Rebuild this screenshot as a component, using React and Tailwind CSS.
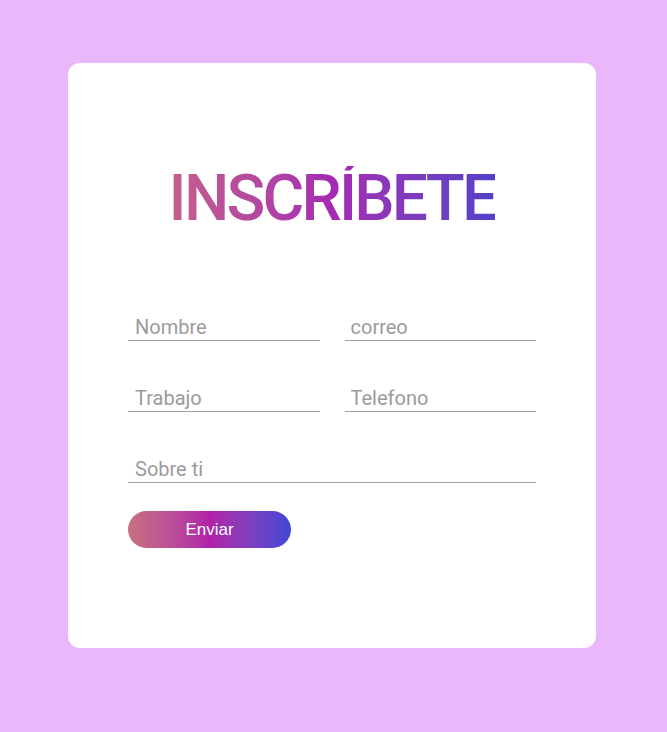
import React from 'react';

export default function App() {
  return (
    <div className="min-h-[732px] w-full bg-[#eab8fa] pt-[63px] pl-[68px]" style={{ fontFamily: 'Roboto, "Liberation Sans", sans-serif' }}>
      <div className="w-[528px] h-[585px] bg-white rounded-[12px] px-[60px] pt-[103px]">
        <h1 className="text-center text-[64px] leading-[66px] font-medium tracking-[-2.8px] bg-gradient-to-r from-[#c65f8a] via-[#a52ab2] to-[#5340c8] bg-clip-text text-transparent w-fit mx-auto">
          INSCRÍBETE
        </h1>

        <form className="mt-[81px] flex flex-col" onSubmit={(e) => e.preventDefault()}>
          <div className="grid grid-cols-2 gap-x-[25px] gap-y-[43px]">
            <input
              type="text"
              placeholder="Nombre"
              className="h-[28px] border-b border-[#a3a3a3] px-[7px] text-[20px] text-[#555] placeholder:text-[#9b9b9b] outline-none"
            />
            <input
              type="email"
              placeholder="correo"
              className="h-[28px] border-b border-[#a3a3a3] px-[6px] text-[20px] text-[#555] placeholder:text-[#9b9b9b] outline-none"
            />
            <input
              type="text"
              placeholder="Trabajo"
              className="h-[28px] border-b border-[#a3a3a3] px-[7px] text-[20px] text-[#555] placeholder:text-[#9b9b9b] outline-none"
            />
            <input
              type="tel"
              placeholder="Telefono"
              className="h-[28px] border-b border-[#a3a3a3] px-[6px] text-[20px] text-[#555] placeholder:text-[#9b9b9b] outline-none"
            />
            <input
              type="text"
              placeholder="Sobre ti"
              className="col-span-2 h-[28px] border-b border-[#a3a3a3] px-[7px] text-[20px] text-[#555] placeholder:text-[#9b9b9b] outline-none"
            />
          </div>

          <button
            type="submit"
            className="mt-[28px] w-[163px] h-[37px] rounded-full bg-gradient-to-r from-[#c8707e] via-[#b01fa8] to-[#3d46d6] text-white text-[17px]"
            style={{ fontFamily: '"Liberation Sans", Arial, sans-serif' }}
          >
            Enviar
          </button>
        </form>
      </div>
    </div>
  );
}
